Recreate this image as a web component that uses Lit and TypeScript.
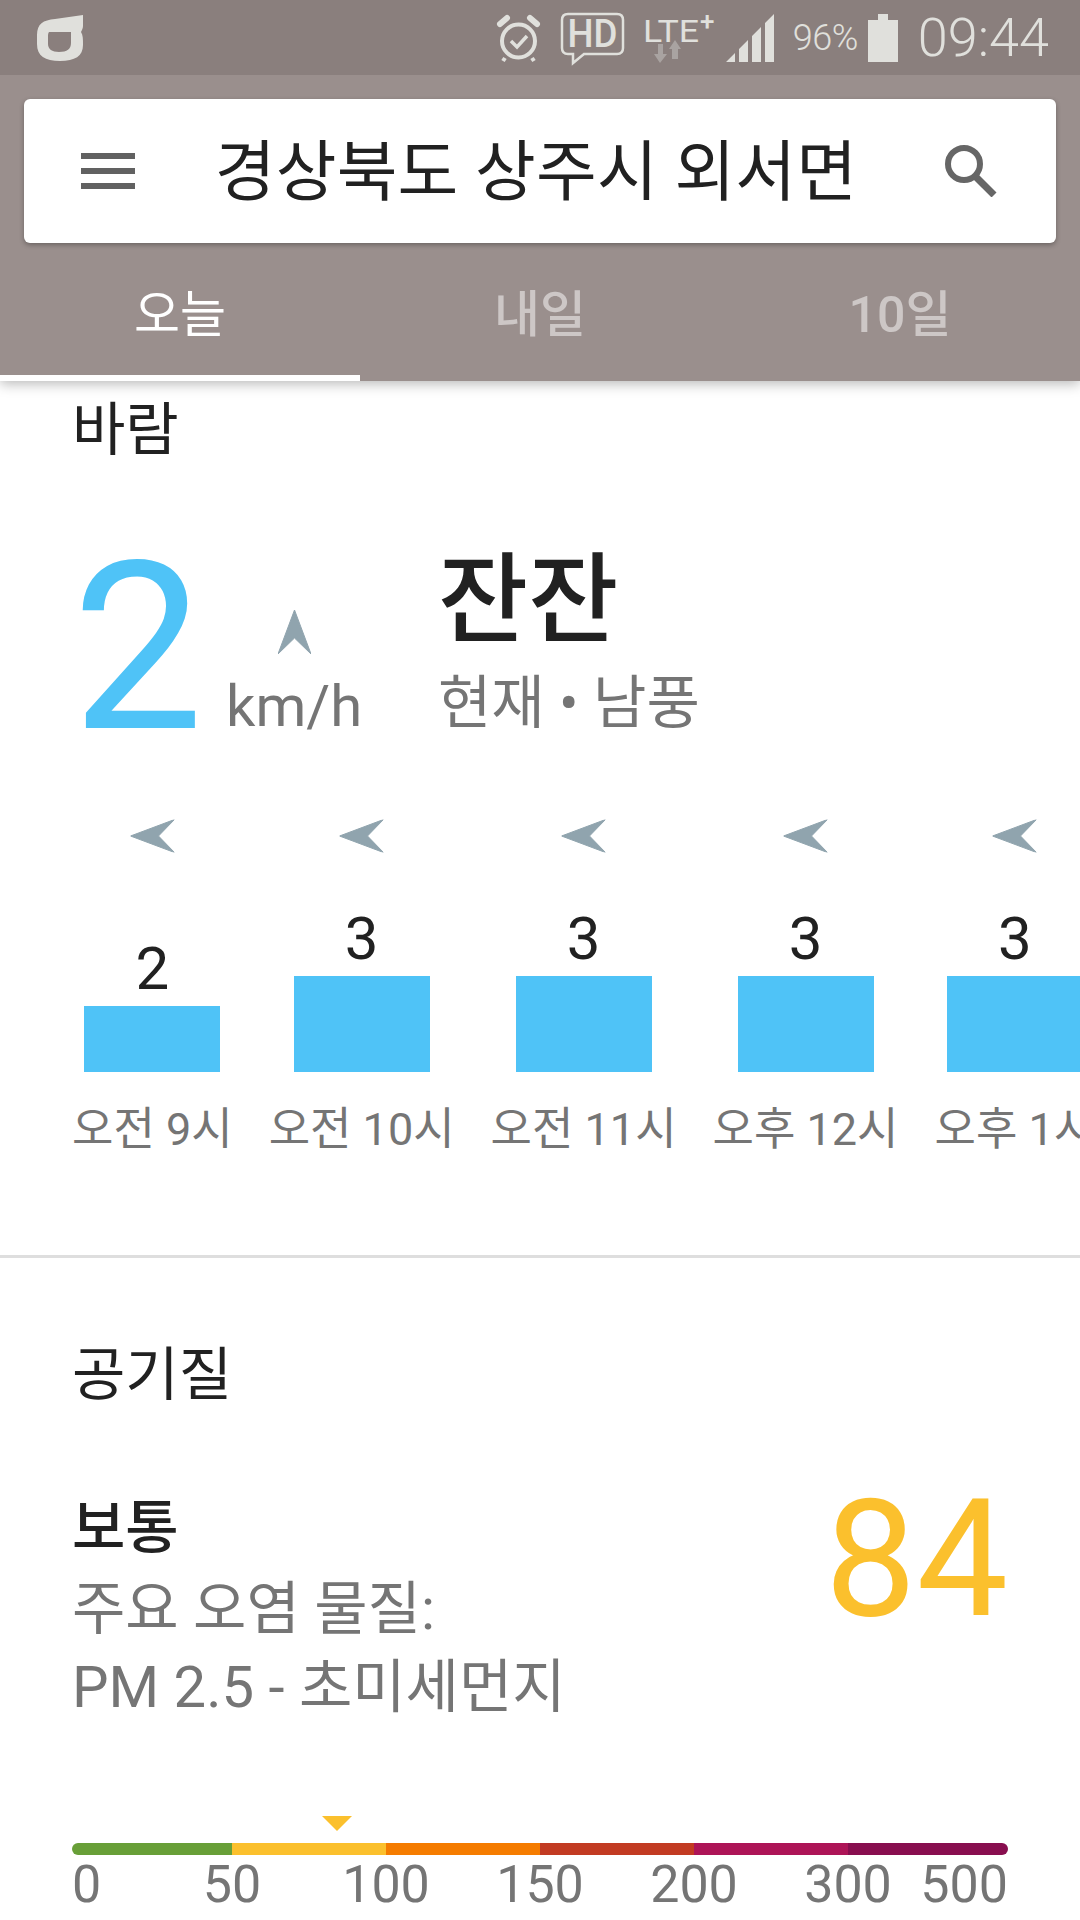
import { LitElement, html, css, svg } from 'lit';
import { customElement } from 'lit/decorators.js';

interface HourWind {
    label: string;
    speed: number;
}

interface ScaleBand {
    color: string;
    width: number;
    tick: string;
}

const HOURS: HourWind[] = [
    { label: '오전 9시', speed: 2 },
    { label: '오전 10시', speed: 3 },
    { label: '오전 11시', speed: 3 },
    { label: '오후 12시', speed: 3 },
    { label: '오후 1시', speed: 3 },
];

const BANDS: ScaleBand[] = [
    { color: '#689f38', width: 160, tick: '50' },
    { color: '#fbc02d', width: 154, tick: '100' },
    { color: '#f57c00', width: 154, tick: '150' },
    { color: '#c23b22', width: 154, tick: '200' },
    { color: '#ad1457', width: 154, tick: '300' },
    { color: '#880e4f', width: 160, tick: '500' },
];

const AQI = 84;

const arrow = svg`<path d="M16.5 0 L33 44 L16.5 28 L0 44 Z" fill="#90a4ae" stroke="#90a4ae" stroke-width="1" stroke-linejoin="round"/>`;

@customElement('app-root')
export class AppRoot extends LitElement {
    static styles = css`
        :host {
            display: block;
            width: 1080px;
            height: 1920px;
            overflow: hidden;
            background: #fff;
            font-family: Roboto, "Noto Sans CJK KR", sans-serif;
            color: #212121;
        }

        .status {
            height: 75px;
            background: #8a7f7d;
            display: flex;
            align-items: center;
            color: #e0e0dc;
            position: relative;
            z-index: 3;
        }

        .status svg {
            display: block;
            flex: none;
            overflow: visible;
        }

        .logo {
            margin-left: 37px;
            margin-right: auto;
        }

        .alarm { margin-right: 20px; }
        .hd { margin-right: 18px; margin-top: 2px; }
        .lte { margin-right: 8px; }
        .signal { margin-right: 19px; }
        .battery { margin-left: 10px; margin-right: 20px; }

        .pct {
            font-size: 36px;
            font-weight: 300;
            letter-spacing: -0.5px;
        }

        .time {
            font-size: 54px;
            font-weight: 300;
            margin-right: 31px;
        }

        .appbar {
            background: #9a8f8d;
            padding-top: 24px;
            box-shadow: 0 3px 12px rgba(0, 0, 0, 0.28);
            position: relative;
            z-index: 2;
        }

        .search {
            margin: 0 24px;
            height: 144px;
            border-radius: 6px;
            background: #fff;
            box-shadow: 0 2px 5px rgba(0, 0, 0, 0.3);
            display: flex;
            align-items: center;
            padding: 0 59px 0 57px;
            box-sizing: border-box;
        }

        .menu {
            width: 54px;
            height: 36px;
            display: flex;
            flex-direction: column;
            justify-content: space-between;
        }

        .menu span {
            height: 6px;
            background: #616161;
        }

        .place {
            flex: 1;
            text-align: center;
            font-size: 66px;
            letter-spacing: 0.2px;
            line-height: 80px;
            color: #212121;
            white-space: nowrap;
            padding: 4px 8px 0 0;
        }

        .tabs {
            display: flex;
            height: 138px;
        }

        .tab {
            flex: 1;
            display: flex;
            align-items: center;
            justify-content: center;
            box-sizing: border-box;
            font-size: 50px;
            padding-bottom: 4px;
            color: rgba(255, 255, 255, 0.5);
            font-weight: 500;
        }

        .tab.active {
            color: #fff;
            font-weight: 400;
            border-bottom: 6px solid #fff;
            padding: 2px 0 0;
        }

        .section-title {
            font-size: 58px;
            line-height: 64px;
            color: #212121;
            margin: 0;
            font-weight: 400;
        }

        .wind {
            padding: 17px 0 0 72px;
            height: 877px;
            box-sizing: border-box;
            border-bottom: 3px solid #dedede;
            overflow: hidden;
        }

        .summary {
            display: flex;
            align-items: flex-end;
            margin-top: 74px;
            height: 200px;
        }

        .big {
            font-size: 234px;
            font-weight: 400;
            line-height: 200px;
            color: #4fc3f7;
            width: 154px;
            flex: none;
            margin-bottom: -12px;
        }

        .unit {
            width: 212px;
            flex: none;
            display: flex;
            flex-direction: column;
            align-items: flex-start;
        }

        .unit svg {
            margin-left: 52px;
            margin-bottom: 22px;
        }

        .unit span {
            font-size: 58px;
            line-height: 60px;
            color: #757575;
        }

        .now-title {
            font-size: 98px;
            font-weight: 500;
            line-height: 110px;
            margin-bottom: 14px;
        }

        .now-sub {
            font-size: 58px;
            line-height: 66px;
            color: #757575;
        }

        .hours {
            display: flex;
            gap: 36px;
            margin-top: 78px;
            width: 1200px;
        }

        .hour {
            flex: none;
            display: flex;
            flex-direction: column;
            align-items: center;
        }

        .hour svg {
            display: block;
            transform: rotate(-90deg);
            margin-bottom: 28px;
        }

        .plot {
            height: 186px;
            display: flex;
            flex-direction: column;
            align-items: center;
            justify-content: flex-end;
        }

        .speed {
            font-size: 60px;
            line-height: 60px;
            margin-bottom: 7px;
        }

        .bar {
            width: 136px;
            background: #4fc3f7;
        }

        .hour-label {
            font-size: 45px;
            line-height: 60px;
            color: #757575;
            margin-top: 28px;
            white-space: nowrap;
        }

        .air {
            padding: 85px 72px 0;
        }

        .air-main {
            display: flex;
            justify-content: space-between;
            margin-top: 89px;
        }

        .air-text {
            font-size: 58px;
            line-height: 78px;
            color: #757575;
        }

        .air-level {
            color: #212121;
            font-weight: 500;
            line-height: 64px;
            margin-bottom: 10px;
        }

        .aqi {
            font-size: 163px;
            font-weight: 400;
            line-height: 140px;
            color: #fbc02d;
            margin-top: -6px;
        }

        .marker {
            margin-top: 90px;
            height: 15px;
        }

        .marker i {
            display: block;
            width: 0;
            height: 0;
            border-left: 15px solid transparent;
            border-right: 15px solid transparent;
            border-top: 15px solid #fbc02d;
            transform: translateX(-15px);
        }

        .scale {
            display: flex;
            height: 12px;
            margin-top: 12px;
            border-radius: 6px;
            overflow: hidden;
        }

        .ticks {
            display: flex;
            margin-top: 2px;
            font-size: 52px;
            line-height: 56px;
            color: #757575;
        }

        .tick {
            flex: none;
            display: flex;
            justify-content: flex-end;
        }

        .tick span {
            transform: translateX(50%);
        }

        .tick.zero {
            width: 0;
            justify-content: flex-start;
        }

        .tick.zero span,
        .tick:last-child span {
            transform: none;
        }
    `;

    private renderStatus() {
        return html`
            <div class="status">
                <svg class="logo" width="46" height="46" viewBox="0 0 46 46">
                    <path fill="#e0e0dc" fill-rule="evenodd" d="M46 0 V11 C46 13 45 15 44 17 C46 20 46 24 46 30 C46 41 38 46 23 46 C8 46 0 41 0 29 V20 C0 9 6 5 18 4 Z M12 17 C11 18 11 20 11 22 V29 C11 34 15 37 22 37 C30 37 34 34 34 28 V17 Z"/>
                </svg>
                <svg class="alarm" width="43" height="46" viewBox="0 0 43 46" fill="none" stroke="#e0e0dc">
                    <circle cx="21.5" cy="26" r="16.5" stroke-width="4"/>
                    <path d="M3 9 L10 3 M40 9 L33 3" stroke-width="6" stroke-linecap="round"/>
                    <path d="M8 43 L6 46 M35 43 L37 46" stroke-width="4"/>
                    <path d="M14 26 L20 32 L30 21" stroke-width="3.5"/>
                </svg>
                <svg class="hd" width="65" height="53" viewBox="0 0 65 53" fill="none">
                    <path d="M8 2 H57 Q63 2 63 8 V36 Q63 42 57 42 H24 L13 51 V42 H8 Q2 42 2 36 V8 Q2 2 8 2 Z" stroke="#e0e0dc" stroke-width="2.5"/>
                    <text x="32.5" y="35" text-anchor="middle" font-size="38" font-weight="500" fill="#e0e0dc" textLength="50" lengthAdjust="spacingAndGlyphs">HD</text>
                </svg>
                <svg class="lte" width="75" height="50" viewBox="0 0 75 50">
                    <text x="0" y="29" font-size="31" fill="#e0e0dc" textLength="56" lengthAdjust="spacingAndGlyphs">LTE</text>
                    <text x="57" y="17" font-size="26" font-weight="500" fill="#e0e0dc">+</text>
                    <path d="M17 50 L11 41 H15 V31 H20 V41 H24 Z M32 27 L38 36 H35 V46 H29 V36 H26 Z" fill="#a9a3a1"/>
                </svg>
                <svg class="signal" width="48" height="48" viewBox="0 0 48 48" fill="#e0e0dc">
                    <path d="M0 48 L9 39 V48 Z M13 35 L22 26 V48 H13 Z M26 22 L35 13 V48 H26 Z M39 9 L48 0 V48 H39 Z"/>
                </svg>
                <span class="pct">96%</span>
                <svg class="battery" width="30" height="48" viewBox="0 0 30 48" fill="#e0e0dc">
                    <path d="M10 0 H20 V6 H30 V48 H0 V6 H10 Z"/>
                </svg>
                <span class="time">09:44</span>
            </div>
        `;
    }

    private renderAppBar() {
        return html`
            <div class="appbar">
                <div class="search">
                    <div class="menu"><span></span><span></span><span></span></div>
                    <div class="place">경상북도 상주시 외서면</div>
                    <svg width="52" height="52" viewBox="0 0 52 52" fill="none" stroke="#666">
                        <circle cx="19" cy="19" r="16" stroke-width="6"/>
                        <path d="M30 31 L49 50" stroke-width="7"/>
                    </svg>
                </div>
                <div class="tabs">
                    <div class="tab active">오늘</div>
                    <div class="tab">내일</div>
                    <div class="tab">10일</div>
                </div>
            </div>
        `;
    }

    private renderWind() {
        return html`
            <section class="wind">
                <h2 class="section-title">바람</h2>
                <div class="summary">
                    <div class="big">2</div>
                    <div class="unit">
                        <svg width="33" height="44" viewBox="0 0 33 44">${arrow}</svg>
                        <span>km/h</span>
                    </div>
                    <div>
                        <div class="now-title">잔잔</div>
                        <div class="now-sub">현재 • 남풍</div>
                    </div>
                </div>
                <div class="hours">
                    ${HOURS.map(h => html`
                        <div class="hour">
                            <svg width="33" height="44" viewBox="0 0 33 44">${arrow}</svg>
                            <div class="plot">
                                <div class="speed">${h.speed}</div>
                                <div class="bar" style="height:${h.speed * 30 + 6}px"></div>
                            </div>
                            <div class="hour-label">${h.label}</div>
                        </div>
                    `)}
                </div>
            </section>
        `;
    }

    private renderAir() {
        // marker sits inside the 50-100 band, 154px per 50 points
        const markerX = 160 + ((AQI - 50) / 50) * 154;
        return html`
            <section class="air">
                <h2 class="section-title">공기질</h2>
                <div class="air-main">
                    <div class="air-text">
                        <div class="air-level">보통</div>
                        <div>주요 오염 물질:</div>
                        <div>PM 2.5 - 초미세먼지</div>
                    </div>
                    <div class="aqi">${AQI}</div>
                </div>
                <div class="marker" style="padding-left:${markerX}px"><i></i></div>
                <div class="scale">
                    ${BANDS.map(b => html`<div style="width:${b.width}px;background:${b.color}"></div>`)}
                </div>
                <div class="ticks">
                    <div class="tick zero"><span>0</span></div>
                    ${BANDS.map(b => html`<div class="tick" style="width:${b.width}px"><span>${b.tick}</span></div>`)}
                </div>
            </section>
        `;
    }

    render() {
        return html`
            ${this.renderStatus()}
            ${this.renderAppBar()}
            ${this.renderWind()}
            ${this.renderAir()}
        `;
    }
}

declare global {
    interface HTMLElementTagNameMap {
        'app-root': AppRoot;
    }
}
